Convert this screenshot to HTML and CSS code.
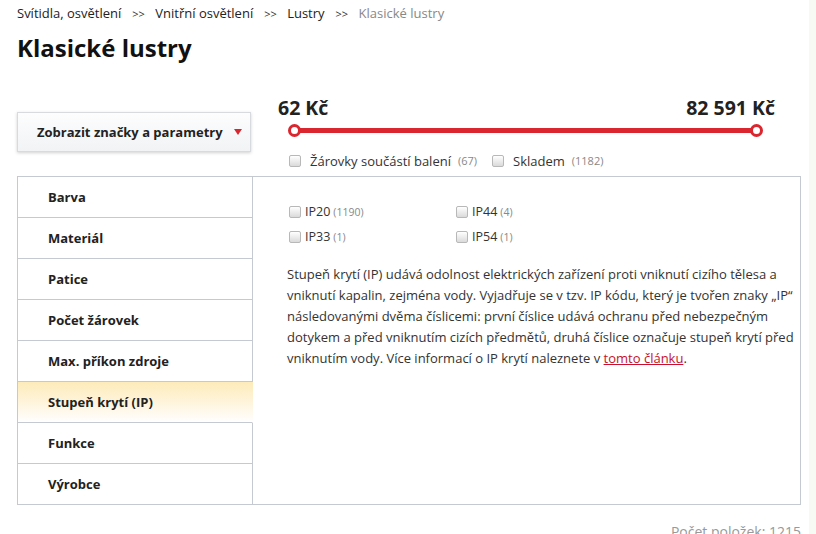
FILE: index.html
```html
<!DOCTYPE html>
<html lang="cs">
<head>
<meta charset="utf-8">
<link rel="stylesheet" href="styles.css">
</head>
<body>
<div class="page">
  <nav class="crumbs">
    <a href="#">Svítidla, osvětlení</a><span class="sep">&gt;&gt;</span>
    <a href="#">Vnitřní osvětlení</a><span class="sep">&gt;&gt;</span>
    <a href="#">Lustry</a><span class="sep">&gt;&gt;</span>
    <span class="current">Klasické lustry</span>
  </nav>
  <h1 class="title">Klasické lustry</h1>

  <div class="filters">
    <button class="toggle">Zobrazit značky a parametry <span class="tri"></span></button>
    <div class="price">
      <div class="price-labels"><span>62 Kč</span><span>82 591 Kč</span></div>
      <div class="slider">
        <div class="track"></div>
        <span class="handle left"></span>
        <span class="handle right"></span>
      </div>
      <div class="quick">
        <label class="chk"><span class="box"></span>Žárovky součástí balení <span class="cnt">(67)</span></label>
        <label class="chk"><span class="box"></span>Skladem <span class="cnt">(1182)</span></label>
      </div>
    </div>
  </div>

  <div class="panel">
    <ul class="tabs">
      <li>Barva</li>
      <li>Materiál</li>
      <li>Patice</li>
      <li>Počet žárovek</li>
      <li>Max. příkon zdroje</li>
      <li class="active">Stupeň krytí (IP)</li>
      <li>Funkce</li>
      <li>Výrobce</li>
    </ul>
    <div class="content">
      <div class="opts">
        <label class="opt"><span class="box"></span>IP20 <span class="cnt">(1190)</span></label>
        <label class="opt"><span class="box"></span>IP44 <span class="cnt">(4)</span></label>
        <label class="opt"><span class="box"></span>IP33 <span class="cnt">(1)</span></label>
        <label class="opt"><span class="box"></span>IP54 <span class="cnt">(1)</span></label>
      </div>
      <p class="desc">Stupeň krytí (IP) udává odolnost elektrických zařízení proti vniknutí cizího tělesa a vniknutí kapalin, zejména vody. Vyjadřuje se v tzv. IP kódu, který je tvořen znaky „IP“ následovanými dvěma číslicemi: první číslice udává ochranu před nebezpečným dotykem a před vniknutím cizích předmětů, druhá číslice označuje stupeň krytí před vniknutím vody. Více informací o IP krytí naleznete v <a href="#">tomto článku</a>.</p>
    </div>
  </div>

  <div class="count">Počet položek: 1215</div>
</div>
<div class="edge"></div>
</body>
</html>
```

FILE: styles.css
```css
* { box-sizing: border-box; }
html, body { margin: 0; padding: 0; background: #fff; }
body {
  font-family: "Open Sans", "Noto Sans", sans-serif;
  color: #222;
  width: 816px;
  height: 534px;
  overflow: hidden;
  position: relative;
}
.edge {
  position: absolute;
  top: 0; right: 0;
  width: 7px; height: 534px;
  background: #f7f9f3;
}
.page { padding: 4px 15px 0 17px; }

.crumbs { font-size: 13px; line-height: 18px; color: #222; white-space: nowrap; }
.crumbs a { color: #222; text-decoration: none; }
.crumbs .sep { font-size: 11px; margin: 0 7px 0 11px; color: #333; }
.crumbs .current { color: #888; }

.title {
  margin: 10px 0 0;
  font-size: 24px;
  line-height: 30px;
  font-weight: 700;
  color: #111;
}

.filters { display: flex; margin-top: 33px; }
.toggle {
  margin-top: 16px;
  width: 234px;
  height: 40px;
  border: 1px solid #d7dbe0;
  background: linear-gradient(#fdfdfe, #f1f3f5);
  box-shadow: 0 1px 3px rgba(0,0,0,0.18);
  font-family: inherit;
  font-size: 13px;
  font-weight: 700;
  color: #222;
  text-align: left;
  padding: 0 0 0 19px;
  display: flex;
  align-items: center;
}
.tri {
  display: inline-block;
  margin-left: 11px;
  width: 0; height: 0;
  border-left: 4px solid transparent;
  border-right: 4px solid transparent;
  border-top: 6px solid #d9262f;
}

.price { margin-left: 27px; width: 497px; }
.price-labels {
  display: flex;
  justify-content: space-between;
  margin-top: 2px;
  font-size: 19.5px;
  font-weight: 700;
  line-height: 20px;
  color: #222;
}
.slider { position: relative; height: 14px; margin: 5px 12px 0 10px; }
.track { position: absolute; left: 6px; right: 6px; top: 5px; height: 5px; background: #d9262f; }
.handle {
  position: absolute;
  top: 1px;
  width: 13px; height: 13px;
  border-radius: 50%;
  background: #fff;
  border: 3px solid #d9262f;
}
.handle.left { left: 0; }
.handle.right { right: 0; }

.quick { display: flex; margin: 16px 0 0 11px; font-size: 13px; color: #333; line-height: 16px; }
.chk { display: flex; align-items: center; margin-right: 15px; }
.chk .cnt { font-size: 11px; color: #888; margin-left: 7px; }
.box {
  display: inline-block;
  flex: none;
  width: 12px; height: 12px;
  border: 1px solid #b8b8b8;
  border-radius: 2px;
  background: linear-gradient(#ffffff, #dadada);
  margin-right: 9px;
}

.panel { display: flex; margin-top: 7px; height: 329px; }
.tabs {
  list-style: none;
  margin: 0; padding: 0;
  width: 236px;
  flex: none;
  border-top: 1px solid #c5c9d2;
}
.tabs li {
  height: 41px;
  border-left: 1px solid #c5c9d2;
  border-right: 1px solid #c5c9d2;
  border-bottom: 1px solid #c5c9d2;
  padding-left: 30px;
  font-size: 13px;
  font-weight: 700;
  line-height: 40px;
  color: #222;
}
.tabs li.active {
  border-right-color: transparent;
  background: linear-gradient(#fdebb9, #fffaf0 80%, #fff);
}
.content {
  flex: 1;
  border: 1px solid #c5c9d2;
  border-left: none;
  padding: 27px 6px 0 34px;
}
.opts { display: grid; grid-template-columns: 167px 167px; row-gap: 9px; margin-left: 2px; }
.opt { display: flex; align-items: center; font-size: 12.5px; color: #333; line-height: 16px; }
.opt .box { margin-right: 4px; }
.opt .cnt { font-size: 10.5px; color: #888; margin-left: 3px; }

.desc {
  margin: 19px 0 0;
  font-size: 13px;
  line-height: 21px;
  color: #333;
}
.desc a { color: #c8102e; text-decoration: underline; }

.count {
  text-align: right;
  font-size: 14px;
  color: #999;
  margin-top: 17px;
  line-height: 19px;
}
```
